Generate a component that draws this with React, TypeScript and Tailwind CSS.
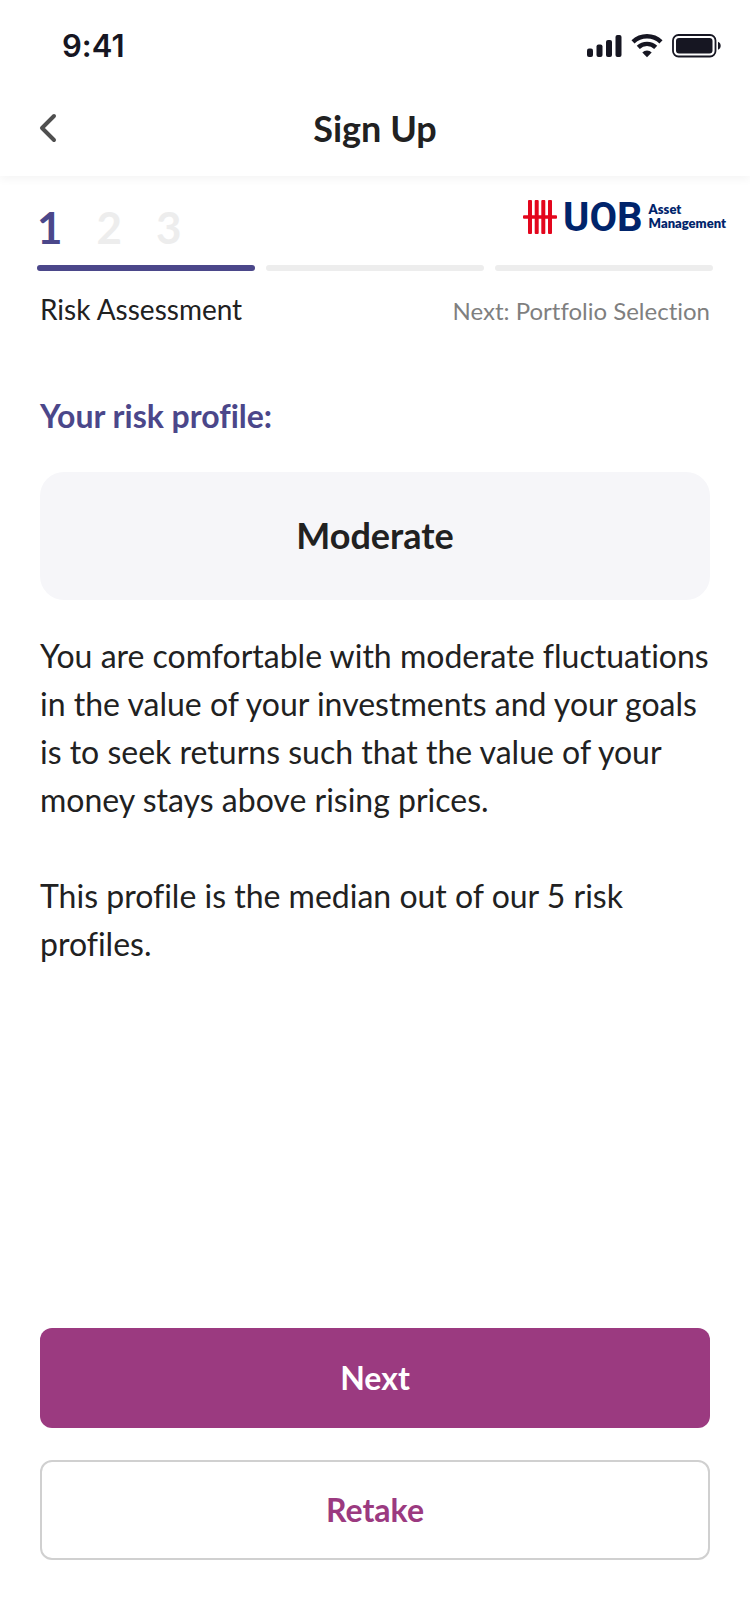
import type { ReactNode } from 'react';

const steps = [1, 2, 3];
const currentStep = 1;

function StatusBar() {
  return (
    <div className="flex h-[88px] items-center justify-between pl-[62px] pr-7 text-[#161622]">
      <span className="pt-1 font-['Inter',sans-serif] text-[31px] leading-9 font-semibold">9:41</span>
      <div className="flex items-center gap-[9px] pt-1">
        <svg className="h-6 w-[35px]" viewBox="0 0 35 24" fill="currentColor" aria-hidden="true">
          <rect x="0" y="14.5" width="6" height="8.5" rx="2" />
          <rect x="9.5" y="10.5" width="6" height="12.5" rx="2" />
          <rect x="19" y="6" width="6" height="17" rx="2" />
          <rect x="28.5" y="1" width="6" height="22" rx="2" />
        </svg>
        <svg className="h-6 w-8" viewBox="0 0 32 24" aria-hidden="true">
          <g fill="none" stroke="currentColor" strokeWidth="4.4">
            <path d="M2 7.9 A20.2 20.2 0 0 1 30 7.9" />
            <path d="M7.3 13.4 A12.6 12.6 0 0 1 24.7 13.4" />
          </g>
          <path d="M16 23.2 L11.3 18.4 A6.8 6.8 0 0 1 20.7 18.4 Z" fill="currentColor" />
        </svg>
        <svg className="h-6 w-[50px]" viewBox="0 0 50 24" fill="currentColor" aria-hidden="true">
          <rect x="1" y="1" width="42.5" height="21.5" rx="5.5" fill="none" stroke="currentColor" strokeWidth="1.8" />
          <rect x="4" y="4" width="36.5" height="15.5" rx="3" />
          <path d="M46 7.8 C49.6 9 49.6 14.6 46 15.8 Z" />
        </svg>
      </div>
    </div>
  );
}

function UobLogo() {
  return (
    <div className="flex items-center text-[#00246b]">
      <svg className="h-[34px] w-[34px]" viewBox="0 0 34 34" fill="#e3061d" aria-hidden="true">
        <rect x="5" y="0" width="4" height="34" rx="1" />
        <rect x="11.7" y="0" width="4" height="34" rx="1" />
        <rect x="18.3" y="0" width="4" height="34" rx="1" />
        <rect x="25" y="0" width="4" height="34" rx="1" />
        <rect x="0" y="15.2" width="34" height="3.6" rx="1" />
      </svg>
      <span className="ml-1.5 pt-0.5 font-['Roboto',sans-serif] text-[40px] leading-8 font-bold">UOB</span>
      <span className="ml-1.5 pb-0.5 text-[13px] leading-[14px] font-extrabold">
        Asset
        <br />
        Management
      </span>
    </div>
  );
}

function ActionButton({ children, primary }: { children: ReactNode; primary?: boolean }) {
  return (
    <button
      type="button"
      className={
        primary
          ? 'h-[100px] w-full rounded-xl bg-[#9b3a80] text-[32px] font-bold text-white'
          : 'h-[100px] w-full rounded-xl border-2 border-[#d0d0d0] bg-white text-[32px] font-bold text-[#9b3a80]'
      }
    >
      {children}
    </button>
  );
}

export default function App() {
  return (
    <div className="flex min-h-screen flex-col bg-white font-['Lato',sans-serif] text-[#212121] [font-variant-ligatures:none]">
      {/* Header */}
      <header className="shadow-[0_4px_8px_rgba(0,0,0,0.04)]">
        <StatusBar />
        <div className="grid h-[88px] grid-cols-[1fr_auto_1fr] items-center px-9 pb-2">
          <button type="button" aria-label="Back" className="flex h-11 w-11 items-center">
            <svg className="h-8 w-6" viewBox="0 0 24 32" fill="none" stroke="#4f4f4f" strokeWidth="4" strokeLinecap="round" strokeLinejoin="round">
              <path d="M18 4 L6 16 L18 28" />
            </svg>
          </button>
          <h1 className="text-4xl font-bold">Sign Up</h1>
        </div>
      </header>

      {/* Progress */}
      <section className="pt-6">
        <div className="flex items-start justify-between pr-6 pl-[37px]">
          <ol className="flex gap-[34px] text-[44px] leading-[54px] font-bold">
            {steps.map((step) => (
              <li key={step} className={step === currentStep ? 'text-[#4b478a]' : 'text-[#ededed]'}>
                {step}
              </li>
            ))}
          </ol>
          <UobLogo />
        </div>
        <div className="mt-[11px] flex gap-[11px] px-[37px]">
          {steps.map((step) => (
            <div key={step} className={step <= currentStep ? 'h-1.5 flex-1 rounded-full bg-[#4b478a]' : 'h-1.5 flex-1 rounded-full bg-[#ededed]'} />
          ))}
        </div>
        <div className="flex items-baseline justify-between px-10 pt-5">
          <p className="text-[28px] leading-9">Risk Assessment</p>
          <p className="text-2xl leading-9 text-[#7f7f7f]">Next: Portfolio Selection</p>
        </div>
      </section>

      {/* Result */}
      <main className="flex flex-1 flex-col px-10 pt-[67px] pb-16">
        <h2 className="text-[32px] leading-10 font-bold text-[#4b478a]">Your risk profile:</h2>
        <div className="mt-9 flex h-32 items-center justify-center rounded-3xl bg-[#f6f6f9] pb-0.5 text-4xl font-bold">Moderate</div>
        <div className="mt-8 -mr-3 space-y-12 text-[32px] leading-[48px]">
          <p>
            You are comfortable with moderate fluctuations in the value of your investments and your goals is to seek
            returns such that the value of your money stays above rising prices.
          </p>
          <p>This profile is the median out of our 5 risk profiles.</p>
        </div>
        <div className="mt-auto space-y-8">
          <ActionButton primary>Next</ActionButton>
          <ActionButton>Retake</ActionButton>
        </div>
      </main>
    </div>
  );
}
